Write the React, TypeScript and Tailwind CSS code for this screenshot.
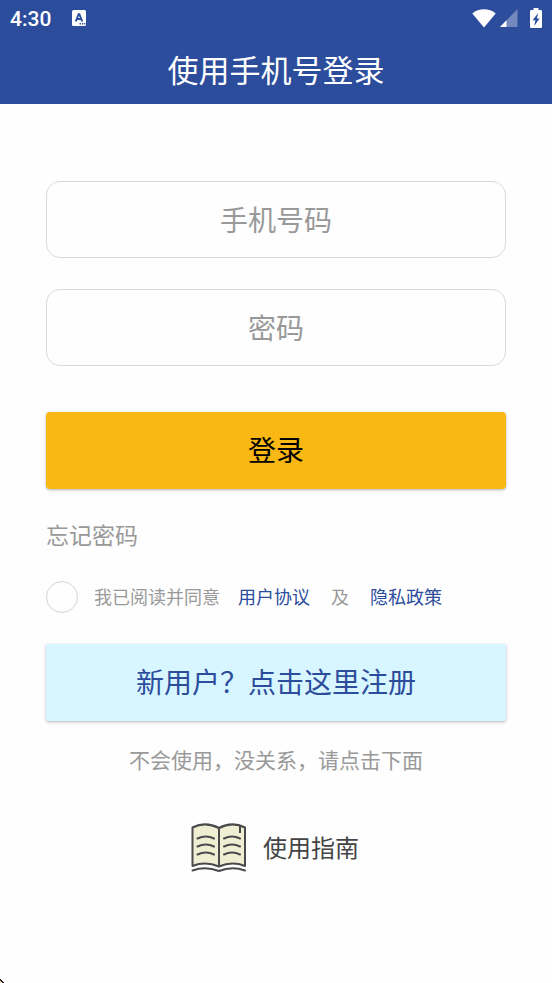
import { useState } from "react";

function KeyboardIcon() {
  return (
    <svg width="14" height="16" viewBox="0 0 14 16" aria-hidden="true">
      <rect width="14" height="16" rx="1.5" fill="#fff" />
      <path
        d="M3.8 11.5 L6.6 4.2 H7.4 L10.2 11.5 M5 9 H9"
        fill="none"
        stroke="#2c4c9c"
        strokeWidth="1.9"
      />
      <path d="M7.5 13h1.5v1.4H7.5zM10 13h1.3v1.4H10zM12.2 13h1.2v1.4h-1.2z" fill="#2c4c9c" />
    </svg>
  );
}

function WifiIcon() {
  return (
    <svg width="24" height="19" viewBox="0 0 24 19" aria-hidden="true">
      <path d="M0.3 4.4 C7 -1.2 17 -1.2 23.7 4.4 L12 18.5 Z" fill="#fff" />
    </svg>
  );
}

function SignalIcon() {
  return (
    <svg width="18" height="18" viewBox="0 0 18 18" aria-hidden="true">
      <path d="M17.5 0 V18 H0 Z" fill="#7388bd" />
      <path d="M6.5 11.3 V18 H0 Z" fill="#fff" />
    </svg>
  );
}

function BatteryIcon() {
  return (
    <svg width="12" height="20" viewBox="0 0 12 20" aria-hidden="true">
      <path
        d="M3.5 0 h5 v2 H10.8 Q12 2 12 3.2 V18.8 Q12 20 10.8 20 H1.2 Q0 20 0 18.8 V3.2 Q0 2 1.2 2 H3.5 Z"
        fill="#fff"
      />
      <path d="M8.2 5 L2.6 12.2 H5.4 L4.2 18 L9.6 10.4 H6.8 Z" fill="#2c4c9c" />
    </svg>
  );
}

function BookIcon() {
  return (
    <svg width="56" height="50" viewBox="0 0 56 50" aria-hidden="true">
      <path
        d="M1.5 4.5 Q14.5 -2 28 5 Q41 -2 54 4.5 V43 Q41 38 28 43.5 Q14.5 38 1.5 43 Z"
        fill="#f0eed2"
      />
      <g fill="none" stroke="#4a4a4c" strokeWidth="2" strokeLinecap="round" strokeLinejoin="round">
        <path d="M1.5 4.5 Q14.5 -2 28 5 Q41 -2 54 4.5 V43 Q41 38 28 43.5 Q14.5 38 1.5 43 Z" />
        <path d="M28 5 V43" />
        <path d="M49 3 V10" strokeLinecap="butt" />
        <path d="M1.5 47.5 Q14.5 43 28 48 Q41 43 54 47.5" />
        <path d="M6.5 15.5 Q15 11.5 23 15.5 M6.5 23.5 Q15 19.5 23 23.5 M6.5 31.5 Q15 27.5 23 31.5" />
        <path d="M33 15.5 Q41 11.5 49 15.5 M33 23.5 Q41 19.5 49 23.5 M33 31.5 Q41 27.5 49 31.5" />
      </g>
    </svg>
  );
}

const inputClass =
  "h-[77px] w-full rounded-[14px] border border-[#dadada] bg-transparent pt-1 text-center text-[28px] text-[#333333] outline-none placeholder:text-[#999999]";

export default function App() {
  const [phone, setPhone] = useState("");
  const [password, setPassword] = useState("");
  const [agreed, setAgreed] = useState(false);

  return (
    <div className="relative min-h-screen bg-[#fefefe] font-['Roboto','Noto_Sans_CJK_SC',sans-serif]">
      <header className="bg-[#2c4c9c] text-white">
        {/* Status bar */}
        <div className="flex h-9 items-center justify-between pl-[10px] pr-[10px]">
          <div className="flex items-center gap-[21px]">
            <span className="pt-0.5 text-[21px] font-medium leading-9">4:30</span>
            <KeyboardIcon />
          </div>
          <div className="flex items-center">
            <WifiIcon />
            <span className="ml-1">
              <SignalIcon />
            </span>
            <span className="ml-3">
              <BatteryIcon />
            </span>
          </div>
        </div>
        <h1 className="pt-1 text-center text-[31px] font-normal leading-16">使用手机号登录</h1>
      </header>

      <main className="px-[46px] pt-[77px]">
        <form onSubmit={(e) => e.preventDefault()}>
          <div className="flex flex-col gap-[31px]">
            <input
              type="tel"
              aria-label="手机号码"
              placeholder="手机号码"
              value={phone}
              onChange={(e) => setPhone(e.target.value)}
              className={inputClass}
            />
            <input
              type="password"
              aria-label="密码"
              placeholder="密码"
              value={password}
              onChange={(e) => setPassword(e.target.value)}
              className={inputClass}
            />
          </div>

          <button
            type="submit"
            className="mt-[46px] h-[77px] w-full rounded-[4px] bg-[#f9b813] pt-0.5 text-[28px] text-black shadow-[0_1px_3px_rgba(0,0,0,0.3)]"
          >
            登录
          </button>

          <div className="mt-8 flex">
            <a href="#forgot" className="text-[23px] leading-8 text-[#999999]">
              忘记密码
            </a>
          </div>

          <div className="mt-7 flex h-8 items-center text-[18px] text-[#999999]">
            <input
              id="agree"
              type="checkbox"
              checked={agreed}
              onChange={(e) => setAgreed(e.target.checked)}
              className="size-8 shrink-0 appearance-none rounded-full border border-[#d5d5d5] checked:bg-[#2c4c9c]"
            />
            <label htmlFor="agree" className="ml-4">
              我已阅读并同意
            </label>
            <a href="#terms" className="ml-[18px] text-[#2c4c9c]">
              用户协议
            </a>
            <span className="mx-[21px]">及</span>
            <a href="#privacy" className="text-[#2c4c9c]">
              隐私政策
            </a>
          </div>
        </form>

        <button
          type="button"
          className="mt-[31px] h-[77px] w-full rounded-[2px] bg-[#d8f6ff] pt-0.5 text-[28px] text-[#2c4c9c] shadow-[0_1px_3px_rgba(0,0,0,0.3)]"
        >
          新用户？点击这里注册
        </button>

        <p className="mt-6 text-center text-[21px] leading-8 text-[#999999]">
          不会使用，没关系，请点击下面
        </p>

        <div className="mt-[46px] flex justify-center pb-8">
          <a href="#guide" className="flex items-center gap-4 pr-0.5 text-[24px] text-[#444444]">
            <BookIcon />
            <span className="pt-0.5">使用指南</span>
          </a>
        </div>
      </main>

      {/* Pointer tip in the corner */}
      <svg className="absolute bottom-0 left-0" width="4" height="4" viewBox="0 0 4 4" aria-hidden="true">
        <path d="M0 0h1v1h1v1h1v1h1v1H2V3H1V2H0z" fill="#222222" />
        <path d="M0 2h1v1h1v1H0z" fill="#f3dfc4" />
      </svg>
    </div>
  );
}
